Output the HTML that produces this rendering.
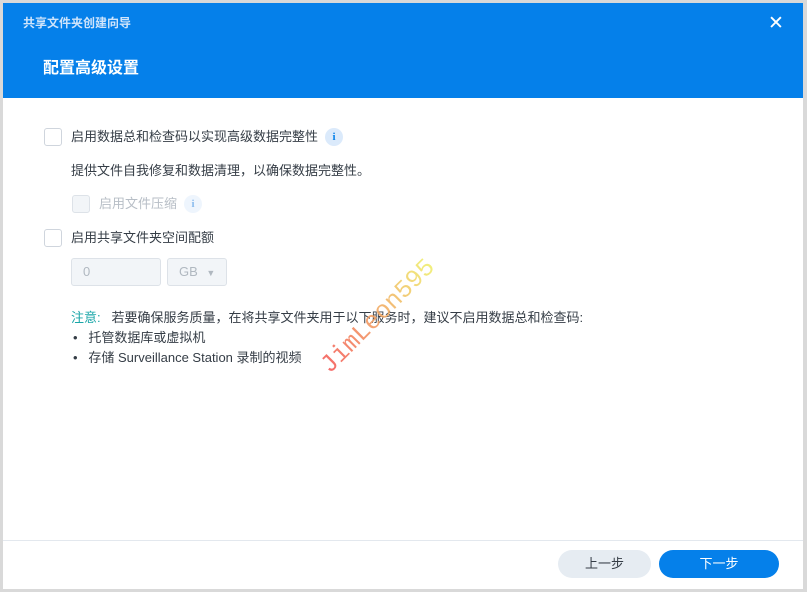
<!DOCTYPE html>
<html><head><meta charset="utf-8"><style>
*{margin:0;padding:0;box-sizing:border-box}
body{width:807px;height:592px;background:#d9d9d9;font-family:"Liberation Sans","Noto Sans CJK SC",sans-serif;position:relative;overflow:hidden}
.dlg{position:absolute;left:3px;top:3px;width:800px;height:586px;background:#fff}
.hd{position:absolute;left:0;top:0;width:800px;height:95px;background:#0580ea}
.t1{position:absolute;left:20px;top:11px;font-size:12px;font-weight:bold;color:#cfe4fb}
.t2{position:absolute;left:40px;top:51px;font-size:16px;font-weight:bold;color:#fff}
.x{position:absolute;left:765px;top:9px;color:#fff;font-size:19px}
.cb{position:absolute;width:18px;height:18px;border:1px solid #cfd5dd;border-radius:3px;background:#fff}
.txt{position:absolute;font-size:13px;color:#353d46;white-space:nowrap}
.info{position:absolute;width:18px;height:18px;border-radius:50%;background:#dbeafb;color:#0580ea;font-size:11px;font-weight:bold;text-align:center;line-height:18px;font-family:"Liberation Serif",serif}
.inp{position:absolute;height:28px;border:1px solid #dde2e8;border-radius:3px;background:#f2f5f8;color:#b0b8c0;font-size:13px;line-height:26px;padding-left:11px}
.ft{position:absolute;left:0;top:537px;width:800px;height:1px;background:#e3e8ee}
.btn{position:absolute;top:547px;height:28px;border-radius:14px;font-size:13px;text-align:center;line-height:28px}
</style></head><body>
<div class="dlg">
<div class="hd"><div class="t1">共享文件夹创建向导</div><div class="t2">配置高级设置</div><div class="x">✕</div></div>
<div class="cb" style="left:41px;top:125px"></div>
<div class="txt" style="left:68px;top:123px">启用数据总和检查码以实现高级数据完整性</div>
<div class="info" style="left:322px;top:125px">i</div>
<div class="txt" style="left:68px;top:157px">提供文件自我修复和数据清理，以确保数据完整性。</div>
<div class="cb" style="left:69px;top:192px;background:#f2f5f8;border-color:#dde2e8"></div>
<div class="txt" style="left:96px;top:190px;color:#b7bec6">启用文件压缩</div>
<div class="info" style="left:181px;top:192px;background:#eef5fd;color:#8bbcee">i</div>
<div class="cb" style="left:41px;top:226px"></div>
<div class="txt" style="left:68px;top:224px">启用共享文件夹空间配额</div>
<div class="inp" style="left:68px;top:255px;width:90px">0</div>
<div class="inp" style="left:164px;top:255px;width:60px">GB <span style="font-size:9px;margin-left:5px">▼</span></div>
<div class="txt" style="left:68px;top:304px"><span style="color:#1aa6a8">注意:</span>&nbsp;&nbsp; 若要确保服务质量，在将共享文件夹用于以下服务时，建议不启用数据总和检查码:</div>
<div class="txt" style="left:70px;top:324px">•&nbsp;&nbsp;&nbsp;托管数据库或虚拟机</div>
<div class="txt" style="left:70px;top:344px">•&nbsp;&nbsp;&nbsp;存储 Surveillance Station 录制的视频</div>
<div style="position:absolute;left:322px;top:352px;font-family:'Liberation Mono',monospace;font-size:25px;transform:rotate(-45deg);transform-origin:left center;background:linear-gradient(90deg,#f45a5a,#f0f070);-webkit-background-clip:text;color:transparent;white-space:nowrap;opacity:.9">JimLeon595</div>
<div class="ft"></div>
<div class="btn" style="left:555px;width:93px;background:#e6ecf2;color:#353d46">上一步</div>
<div class="btn" style="left:656px;width:120px;background:#0580ea;color:#fff">下一步</div>
</div>
</body></html>
